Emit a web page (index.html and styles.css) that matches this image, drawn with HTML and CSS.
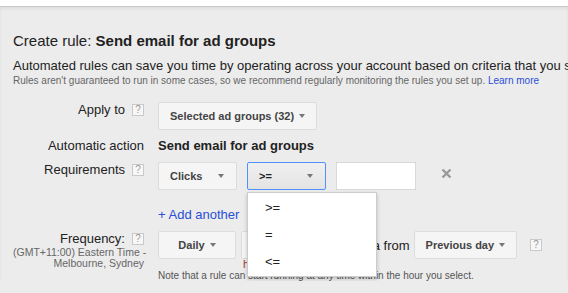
FILE: index.html
```html
<!DOCTYPE html>
<html lang="en">

<head>
  <meta charset="UTF-8">
  <meta name="viewport" content="width=device-width, initial-scale=1.0">
  <title>Create rule</title>
  <link rel="stylesheet" href="styles.css">
</head>

<body>
  <div class="topbar"></div>

  <div class="panel">
    <h1 class="title">Create rule: <b>Send email for ad groups</b></h1>
    <p class="intro">Automated rules can save you time by operating across your account based on criteria that you specify.</p>
    <p class="hint">Rules aren't guaranteed to run in some cases, so we recommend regularly monitoring the rules you set up. <a href="#">Learn more</a></p>

    <div class="form">
      <div class="row row-apply">
        <div class="label">
          <div class="label-line">Apply to <span class="help">?</span></div>
        </div>
        <div class="value">
          <div class="btn">Selected ad groups (32) <span class="arrow"></span></div>
        </div>
      </div>

      <div class="row row-action">
        <div class="label">
          <div class="label-line">Automatic action</div>
        </div>
        <div class="value">
          <div class="action-name">Send email for ad groups</div>
        </div>
      </div>

      <div class="row row-req">
        <div class="label">
          <div class="label-line">Requirements <span class="help">?</span></div>
        </div>
        <div class="value controls">
          <div class="btn btn-fixed">Clicks <span class="arrow"></span></div>
          <div class="select-wrap">
            <div class="btn btn-fixed btn-focus">&gt;= <span class="arrow"></span></div>
            <ul class="menu">
              <li>&gt;=</li>
              <li>=</li>
              <li>&lt;=</li>
            </ul>
          </div>
          <div class="text-input"></div>
          <svg class="remove" width="11" height="11" viewBox="0 0 11 11">
            <path d="M1.5 1.5 L9.5 9.5 M9.5 1.5 L1.5 9.5" stroke="#999" stroke-width="2.4" fill="none"/>
          </svg>
        </div>
      </div>

      <div class="row row-add">
        <div class="label"></div>
        <div class="value">
          <a href="#" class="add-link">+ Add another</a>
        </div>
      </div>

      <div class="row row-freq">
        <div class="label">
          <div class="label-line">Frequency: <span class="help">?</span></div>
          <div class="tz">(GMT+11:00) Eastern Time -<br>Melbourne, Sydney</div>
        </div>
        <div class="value">
          <div class="controls">
            <div class="btn btn-daily">Daily <span class="arrow"></span></div>
            <div class="btn btn-hour">12 AM <span class="arrow"></span></div>
            <span class="using">using data from</span>
            <div class="btn">Previous day <span class="arrow"></span></div>
            <span class="help help-side">?</span>
          </div>
          <div class="hour-hint">hour of the day</div>
          <div class="note">Note that a rule can start running at any time within the hour you select.</div>
        </div>
      </div>
    </div>
  </div>
</body>

</html>
```

FILE: styles.css
```css
body {
  margin: 0;
  padding: 0;
  font-family: "Liberation Sans", Arial, sans-serif;
  background: #ececec;
  color: #222;
  overflow: hidden;
}

.topbar {
  height: 6px;
  background: white;
  border-bottom: 1px solid #c9c9c9;
}

.panel {
  padding: 25px 0 0 13px;
  white-space: nowrap;
  box-shadow: inset 0 2px 3px rgba(0, 0, 0, 0.06);
}

.title {
  margin: 0;
  font-size: 15px;
  line-height: 18px;
  font-weight: normal;
}

.intro {
  margin: 8px 0 0 0;
  font-size: 13px;
  line-height: 16px;
}

.hint {
  margin: 0;
  font-size: 10px;
  line-height: 13px;
  color: #666;
}

.hint a {
  color: #2a4fd6;
  text-decoration: none;
}

.form {
  margin-top: 15px;
}

.row {
  display: flex;
  align-items: flex-start;
}

.row-action {
  margin-top: 8px;
}

.row-req {
  margin-top: 8px;
}

.row-add {
  margin-top: 17px;
}

.row-freq {
  margin-top: 8px;
}

.label {
  width: 131px;
  flex: none;
  font-size: 13px;
  line-height: 16px;
  text-align: right;
}

.label-line {
  display: flex;
  justify-content: flex-end;
  align-items: center;
  gap: 7px;
}

.value {
  margin-left: 14px;
  font-size: 13px;
}

.help {
  display: inline-flex;
  align-items: center;
  justify-content: center;
  width: 10px;
  height: 10px;
  border: 1px solid #c9c9c9;
  background: #f7f7f7;
  color: #999;
  font-size: 10px;
  line-height: 10px;
}

.help-side {
  margin-left: 8px;
}

.tz {
  margin-top: 0;
  font-size: 10.5px;
  line-height: 11px;
  color: #666;
}

.btn {
  box-sizing: border-box;
  height: 28px;
  padding: 0 11px;
  display: inline-flex;
  align-items: center;
  justify-content: center;
  gap: 5px;
  border: 1px solid #dcdcdc;
  border-radius: 2px;
  background: #f5f5f5;
  color: #444;
  font-size: 11px;
  font-weight: bold;
}

.arrow {
  width: 0;
  height: 0;
  border-top: 4px solid #777;
  border-left: 3.5px solid transparent;
  border-right: 3.5px solid transparent;
}

.btn-fixed {
  width: 79px;
  justify-content: space-between;
  padding: 0 12px 0 11px;
}

.btn-focus {
  border-color: #4d90fe;
  background: linear-gradient(#f0f0f0, #e3e3e3);
  color: #222;
}

.controls {
  display: flex;
  align-items: center;
  gap: 10px;
}

.action-name {
  font-weight: bold;
  line-height: 16px;
}

.select-wrap {
  position: relative;
}

.menu {
  position: absolute;
  top: 30px;
  left: 0;
  z-index: 2;
  box-sizing: border-box;
  width: 130px;
  height: 85px;
  margin: 0;
  padding: 1px 0 0 0;
  list-style: none;
  background: white;
  border: 1px solid rgba(0, 0, 0, 0.2);
  box-shadow: 0 2px 4px rgba(0, 0, 0, 0.2);
}

.menu li {
  height: 27px;
  line-height: 27px;
  padding-left: 17px;
  font-size: 13px;
  color: #222;
}

.text-input {
  box-sizing: border-box;
  width: 80px;
  height: 28px;
  background: white;
  border: 1px solid #d9d9d9;
}

.remove {
  margin-left: 15px;
  margin-bottom: 6px;
}

.add-link {
  display: block;
  line-height: 16px;
  color: #2a4fd6;
  text-decoration: none;
}

.row-freq .controls {
  gap: 5px;
}

.btn-daily {
  width: 78px;
}

.btn-hour {
  width: 71px;
}

.using {
  margin-left: 3px;
  margin-right: -1px;
  color: #222;
}

.hour-hint {
  margin-left: 85px;
  font-size: 11px;
  line-height: 11px;
  color: #9a3b2e;
}

.note {
  font-size: 10px;
  line-height: 11px;
  color: #555;
}
```
